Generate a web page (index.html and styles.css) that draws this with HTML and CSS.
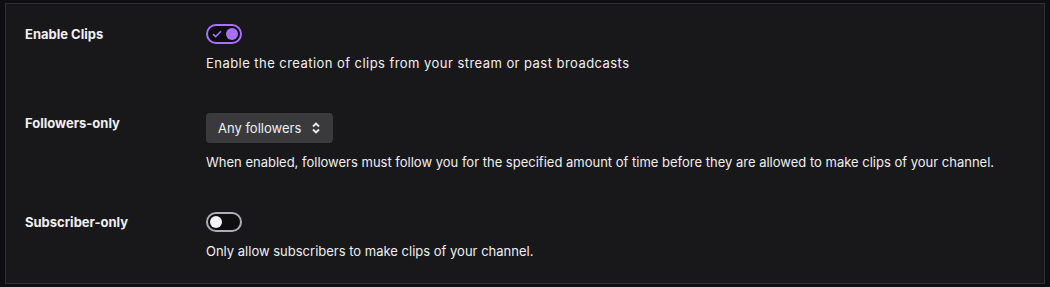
FILE: index.html
```html
<!DOCTYPE html>
<html lang="en">
<head>
  <meta charset="UTF-8">
  <title>Clips settings</title>
  <link rel="stylesheet" href="styles.css">
</head>
<body>
  <div class="panel">
    <div class="row">
      <div class="label">Enable Clips</div>
      <div class="control">
        <label class="toggle on">
          <svg class="check" width="10" height="8" viewBox="0 0 10 8"><path d="M1 4.2 L3.6 6.6 L9 1.2" fill="none" stroke="#a970ff" stroke-width="1.6"/></svg>
          <span class="thumb"></span>
        </label>
        <p class="desc wide">Enable the creation of clips from your stream or past broadcasts</p>
      </div>
    </div>

    <div class="row">
      <div class="label">Followers-only</div>
      <div class="control">
        <div class="select">
          <span>Any followers</span>
          <svg width="10" height="12" viewBox="0 0 10 12"><path d="M2 4.5 L5 1.5 L8 4.5 M2 7.5 L5 10.5 L8 7.5" fill="none" stroke="#efeff1" stroke-width="1.8"/></svg>
        </div>
        <p class="desc">When enabled, followers must follow you for the specified amount of time before they are allowed to make clips of your channel.</p>
      </div>
    </div>

    <div class="row last">
      <div class="label">Subscriber-only</div>
      <div class="control">
        <label class="toggle">
          <span class="thumb"></span>
        </label>
        <p class="desc">Only allow subscribers to make clips of your channel.</p>
      </div>
    </div>
  </div>
</body>
</html>
```

FILE: styles.css
```css
body {
  margin: 0;
  padding: 3px 5px 0 5px;
  background-color: #0e0e10;
  font-family: 'Inter', 'Roboto', sans-serif;
  font-size: 13px;
  color: #efeff1;
}

.panel {
  background-color: #18181b;
  border: 1px solid #2f2f35;
  width: 1040px;
  box-sizing: border-box;
}

.row {
  display: flex;
  padding: 20px 19px 21px 19px;
}

.row.last {
  padding-bottom: 23px;
}

.label {
  width: 181px;
  flex-shrink: 0;
  font-weight: 700;
  line-height: 20px;
}

.control {
  display: flex;
  flex-direction: column;
  align-items: flex-start;
}

.toggle {
  position: relative;
  display: block;
  width: 36px;
  height: 20px;
  box-sizing: border-box;
  border: 2px solid #adadb8;
  border-radius: 10px;
  background-color: #0e0e10;
}

.toggle .thumb {
  position: absolute;
  top: 2px;
  left: 2px;
  width: 12px;
  height: 12px;
  border-radius: 50%;
  background-color: #f4f4f6;
}

.toggle.on {
  border-color: #a970ff;
  background-color: #0e0e10;
}

.toggle.on .thumb {
  left: auto;
  right: 2px;
  background-color: #a970ff;
}

.toggle .check {
  position: absolute;
  top: 4px;
  left: 4px;
}

.select {
  display: flex;
  align-items: center;
  gap: 10px;
  height: 30px;
  padding: 0 12px 0 12px;
  background-color: #3a3a3d;
  border-radius: 4px;
  box-sizing: border-box;
}

.desc {
  margin: 10px 0 0 0;
  line-height: 18px;
}

.desc.wide {
  letter-spacing: 0.45px;
}
```
